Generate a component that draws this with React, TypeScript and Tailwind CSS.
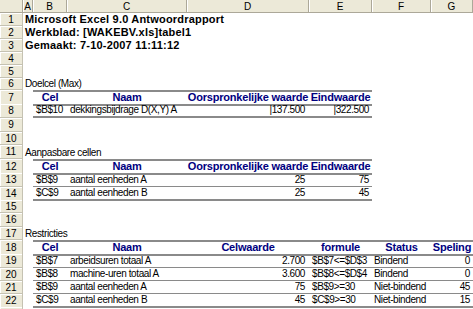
import React from "react";

type Row =
  | { kind: "empty" }
  | { kind: "title"; text: string; bold?: boolean }
  | { kind: "head"; cells: string[] }
  | { kind: "data"; cells: string[]; last?: boolean; wide?: boolean };

const GRID = "grid grid-cols-[23px_10px_34px_120px_122px_63px_59px_42px]";

const heights = [
  "h-[13px]", "h-[13px]", "h-[13px]", "h-[13px]", "h-[13px]", "h-[12px]",
  "h-[14px]", "h-[14px]", "h-[14px]", "h-[13px]", "h-[14px]", "h-[14px]",
  "h-[14px]", "h-[13px]", "h-[13px]", "h-[14px]", "h-[13px]", "h-[14px]",
  "h-[14px]", "h-[13px]", "h-[13px]", "h-[13px]", "h-[13px]",
];

const rows: Row[] = [
  { kind: "title", text: "Microsoft Excel 9.0 Antwoordrapport", bold: true },
  { kind: "title", text: "Werkblad: [WAKEBV.xls]tabel1", bold: true },
  { kind: "title", text: "Gemaakt: 7-10-2007 11:11:12", bold: true },
  { kind: "empty" },
  { kind: "empty" },
  { kind: "title", text: "Doelcel (Max)" },
  { kind: "head", cells: ["Cel", "Naam", "Oorspronkelijke waarde", "Eindwaarde"] },
  { kind: "data", cells: ["$B$10", "dekkingsbijdrage D(X,Y) A", "|137.500", "|322.500"], last: true },
  { kind: "empty" },
  { kind: "empty" },
  { kind: "title", text: "Aanpasbare cellen" },
  { kind: "head", cells: ["Cel", "Naam", "Oorspronkelijke waarde", "Eindwaarde"] },
  { kind: "data", cells: ["$B$9", "aantal eenheden A", "25", "75"] },
  { kind: "data", cells: ["$C$9", "aantal eenheden B", "25", "45"], last: true },
  { kind: "empty" },
  { kind: "empty" },
  { kind: "title", text: "Restricties" },
  { kind: "head", cells: ["Cel", "Naam", "Celwaarde", "formule", "Status", "Speling"] },
  { kind: "data", wide: true, cells: ["$B$7", "arbeidsuren totaal A", "2.700", "$B$7<=$D$3", "Bindend", "0"] },
  { kind: "data", wide: true, cells: ["$B$8", "machine-uren totaal A", "3.600", "$B$8<=$D$4", "Bindend", "0"] },
  { kind: "data", wide: true, cells: ["$B$9", "aantal eenheden A", "75", "$B$9>=30", "Niet-bindend", "45"] },
  { kind: "data", wide: true, cells: ["$C$9", "aantal eenheden B", "45", "$C$9>=30", "Niet-bindend", "15"], last: true },
  { kind: "empty" },
];

// alignment of data cells for columns B..G
const alignNarrow = ["justify-start pl-[3px]", "justify-start pl-[3px]", "justify-end pr-[4px]", "justify-end pr-[3px]"];
const alignWide = [
  "justify-start pl-[3px]",
  "justify-start pl-[3px]",
  "justify-end pr-[4px]",
  "justify-start pl-[3px]",
  "justify-start pl-[2px]",
  "justify-end pr-[3px]",
];

const cellBase = "flex items-end pb-[1px] whitespace-nowrap overflow-visible min-w-0 leading-[11px]";

function RowHead({ n, label }: { n: number; label: boolean }) {
  return (
    <div className="flex items-center justify-center bg-[#ece9d8] border-r border-b border-[#c5c2b2] shadow-[inset_1px_1px_0_#fff] text-[10px] leading-[11px] text-black">
      {label && n}
    </div>
  );
}

function Cells({ row }: { row: Row }) {
  const out: React.ReactNode[] = [];
  for (let c = 0; c < 7; c++) {
    if (row.kind === "title") {
      out.push(
        <div key={c} className={cellBase}>
          {c === 0 && (
            <span
              className={
                row.bold
                  ? "pl-[2px] text-[11px] font-bold tracking-[0.2px] text-black"
                  : "pl-[2px] text-[10px] tracking-[-0.4px] text-black"
              }
            >
              {row.text}
            </span>
          )}
        </div>
      );
      continue;
    }
    if (row.kind === "head") {
      const i = c - 1;
      const inTable = i >= 0 && i < row.cells.length;
      out.push(
        <div
          key={c}
          className={
            inTable
              ? `${cellBase} justify-center border-t-2 border-b-2 border-[#8a8a8a] text-[11px] font-bold tracking-[-0.2px] text-[#000080]`
              : cellBase
          }
        >
          {inTable && row.cells[i]}
        </div>
      );
      continue;
    }
    if (row.kind === "data") {
      const i = c - 1;
      const inTable = i >= 0 && i < row.cells.length;
      const align = (row.wide ? alignWide : alignNarrow)[i] ?? "";
      const border = row.last ? "border-b-2" : "border-b";
      out.push(
        <div
          key={c}
          className={
            inTable
              ? `${cellBase} ${align} ${border} border-[#8a8a8a] text-[10px] tracking-[-0.4px] text-black`
              : cellBase
          }
        >
          {inTable && row.cells[i]}
        </div>
      );
      continue;
    }
    out.push(<div key={c} className={cellBase} />);
  }
  return <>{out}</>;
}

export default function App() {
  const letters = ["A", "B", "C", "D", "E", "F", "G"];
  return (
    <div className="w-[473px] h-[309px] overflow-hidden bg-white font-['Liberation_Sans',Arial,sans-serif]">
      {/* column headers */}
      <div className={`${GRID} h-[13px]`}>
        <div className="bg-[#ece9d8] border-r border-b border-[#aca899]" />
        {letters.map((l) => (
          <div
            key={l}
            className="flex items-center justify-center bg-[#ece9d8] border-r border-b border-[#aca899] shadow-[inset_1px_0_0_#fff] text-[10px] leading-[11px] text-black"
          >
            {l}
          </div>
        ))}
      </div>
      {rows.map((row, idx) => (
        <div key={idx} className={`${GRID} ${heights[idx]}`}>
          <RowHead n={idx + 1} label={idx < rows.length - 1} />
          <Cells row={row} />
        </div>
      ))}
    </div>
  );
}
